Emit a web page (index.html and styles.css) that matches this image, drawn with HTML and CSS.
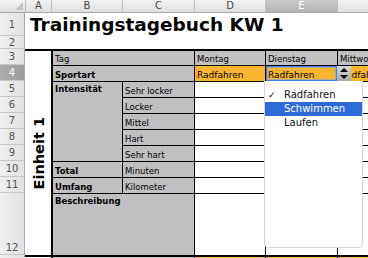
FILE: index.html
```html
<!DOCTYPE html>
<html lang="de">
<head>
<meta charset="utf-8">
<title>Trainingstagebuch</title>
<link rel="stylesheet" href="styles.css">
</head>
<body>
<div class="sheet">
  <div class="corner"><span class="tri"></span></div>
  <div class="ch">A</div>
  <div class="ch">B</div>
  <div class="ch">C</div>
  <div class="ch">D</div>
  <div class="ch sel">E</div>
  <div class="ch">F</div>

  <div class="rh">1</div>
  <div class="title">Trainingstagebuch KW 1</div>

  <div class="rh">2</div>
  <div class="blank"></div>

  <div class="rh">3</div>
  <div class="unit"><span>Einheit 1</span></div>
  <div class="c g first wide top">Tag</div>
  <div class="c g top">Montag</div>
  <div class="c g top">Dienstag</div>
  <div class="c g top">Mittwoch</div>

  <div class="rh sel">4</div>
  <div class="c g first wide b">Sportart</div>
  <div class="c o">Radfahren</div>
  <div class="c o cur">Radfahren</div>
  <div class="c o">Radfahren</div>

  <div class="rh">5</div>
  <div class="c g first b tall">Intensität</div>
  <div class="c g">Sehr locker</div>
  <div class="c"></div><div class="c"></div><div class="c"></div>

  <div class="rh">6</div>
  <div class="c g">Locker</div>
  <div class="c"></div><div class="c"></div><div class="c"></div>

  <div class="rh">7</div>
  <div class="c g">Mittel</div>
  <div class="c"></div><div class="c"></div><div class="c"></div>

  <div class="rh">8</div>
  <div class="c g">Hart</div>
  <div class="c"></div><div class="c"></div><div class="c"></div>

  <div class="rh">9</div>
  <div class="c g">Sehr hart</div>
  <div class="c"></div><div class="c"></div><div class="c"></div>

  <div class="rh">10</div>
  <div class="c g first b">Total</div>
  <div class="c g">Minuten</div>
  <div class="c"></div><div class="c"></div><div class="c"></div>

  <div class="rh">11</div>
  <div class="c g first b">Umfang</div>
  <div class="c g">Kilometer</div>
  <div class="c"></div><div class="c"></div><div class="c"></div>

  <div class="rh low">12</div>
  <div class="c g first wide b desc">Beschreibung</div>
  <div class="c"></div><div class="c"></div><div class="c"></div>

  <div class="rh"></div>
  <div class="next"></div>
  <div class="c g first wide top"></div>
  <div class="c o top"></div>
  <div class="c o top"></div>
  <div class="c o top"></div>
</div>

<div class="spinner">
  <svg width="8" height="11" viewBox="0 0 8 11"><polygon points="4,0 8,4 0,4" fill="#000"/><polygon points="0,7 8,7 4,11" fill="#000"/></svg>
</div>

<div class="menu">
  <div class="item checked"><span class="check">✓</span>Radfahren</div>
  <div class="item hl">Schwimmen</div>
  <div class="item">Laufen</div>
</div>
</body>
</html>
```

FILE: styles.css
```css
* { box-sizing: border-box; margin: 0; padding: 0; }
html, body { width: 368px; height: 258px; overflow: hidden; background: #fff; }
body {
  position: relative;
  font-family: "DejaVu Sans", "Verdana", sans-serif;
  font-size: 8.5px;
  color: #000;
}

.sheet {
  display: grid;
  width: 408px;
  grid-template-columns: 25px 26px 71px 72px 71px 72px 71px;
  grid-template-rows: 13px 23px 13px 16px 16px repeat(7, 16px) 62px 20px;
}

/* headers */
.corner {
  position: relative;
  background: linear-gradient(#f4f4f4, #dedede);
  border-bottom: 1px solid #a8a8a8;
}
.tri {
  position: absolute;
  right: 2px; bottom: 2px;
  width: 0; height: 0;
  border-left: 8px solid transparent;
  border-bottom: 8px solid #c6c6c6;
}
.ch {
  background: linear-gradient(#f4f4f4, #dedede);
  border-left: 1px solid #bdbdbd;
  border-bottom: 1px solid #a8a8a8;
  color: #4a4a4a;
  font-size: 10px;
  line-height: 12px;
  text-align: center;
}
.ch.sel { background: linear-gradient(#c9c9c9, #b3b3b3); color: #fff; }
.rh {
  background: linear-gradient(90deg, #eeeeee, #e2e2e2);
  border-right: 1px solid #a8a8a8;
  border-bottom: 1px solid #c8c8c8;
  color: #555;
  font-size: 10px;
  display: flex;
  align-items: center;
  justify-content: center;
}
.rh.sel { background: linear-gradient(90deg, #adadad, #9d9d9d); color: #fff; }
.rh.low { align-items: flex-end; padding-bottom: 1px; }

.title {
  grid-column: span 6;
  font-size: 18.5px;
  font-weight: bold;
  line-height: 23px;
  padding-left: 5px;
  white-space: nowrap;
}
.blank { grid-column: span 6; }

.unit {
  grid-row: span 10;
  border-top: 2px solid #000;
  display: flex;
  align-items: center;
  justify-content: center;
  padding-left: 1px;
}
.unit span {
  writing-mode: vertical-rl;
  transform: rotate(180deg);
  font-size: 14.5px;
  font-weight: bold;
  white-space: nowrap;
}
.next { border-top: 2px solid #000; }

/* cells */
.c {
  border-top: 1px solid #000;
  border-left: 1px solid #000;
  padding: 0 2px;
  display: flex;
  align-items: flex-end;
  line-height: 12px;
  white-space: nowrap;
  overflow: hidden;
}
.c.top { border-top-width: 2px; }
.c.first { border-left-width: 2px; }
.c.wide { grid-column: span 2; }
.c.b { font-weight: bold; }
.c.g { background: #c0c0c0; }
.c.o { background: #f9b531; font-size: 9px; }
.c.tall { grid-row: span 5; align-items: flex-start; padding-top: 1px; }
.c.desc { align-items: flex-start; padding-top: 1px; }
.c.cur { box-shadow: inset 0 0 0 1px #3c7ee0, inset 0 0 0 2px rgba(120,165,235,0.6); }

/* overlays */
.spinner {
  position: absolute;
  left: 337px; top: 66px;
  width: 14px; height: 15px;
  background: linear-gradient(#d6d6d6, #a9a9a9);
  display: flex;
  align-items: center;
  justify-content: center;
}
.spinner svg { display: block; }

.menu {
  position: absolute;
  left: 264px; top: 81px;
  width: 99px; height: 167px;
  background: #fff;
  border: 1px solid #d4d4d4;
  border-top: none;
  border-radius: 0 0 5px 5px;
  padding-top: 7px;
  font-size: 10px;
}
.item {
  position: relative;
  height: 14px;
  line-height: 14px;
  padding-left: 19px;
  color: #111;
}
.item.hl { background: #2f6bd8; color: #fff; }
.check {
  position: absolute;
  left: 3px; top: 0;
  font-size: 9px;
}
```
